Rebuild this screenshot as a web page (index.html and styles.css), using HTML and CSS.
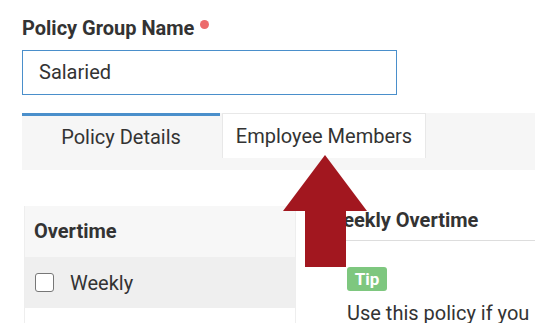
FILE: index.html
```html
<!DOCTYPE html>
<html>
<head>
<meta charset="utf-8">
<link rel="stylesheet" href="styles.css">
</head>
<body>
<div class="page">
  <div class="label-row"><span class="label">Policy Group Name</span><span class="req"></span></div>
  <div class="input">Salaried</div>
  <div class="tabs">
    <div class="tab tab-active">Policy Details</div>
    <div class="tab tab-plain">Employee Members</div>
  </div>
  <div class="content">
    <div class="side">
      <div class="side-head">Overtime</div>
      <div class="side-row"><span class="check"></span><span class="row-text">Weekly</span></div>
      <div class="side-rest"></div>
    </div>
    <div class="main">
      <div class="main-head">Weekly Overtime</div>
      <div class="main-body">
        <span class="tip">Tip</span>
        <p class="desc">Use this policy if you</p>
      </div>
    </div>
  </div>
  <svg class="arrow" width="535" height="323" viewBox="0 0 535 323">
    <polygon points="325,155 367,211 346,211 346,267 305,267 305,211 283,211" fill="#a2171f"/>
  </svg>
</div>
</body>
</html>
```

FILE: styles.css
```css
html, body {
  margin: 0;
  padding: 0;
  background: #ffffff;
}
body {
  font-family: Roboto, "Liberation Sans", sans-serif;
  color: #333333;
  width: 535px;
  height: 323px;
  overflow: hidden;
}
.page {
  position: relative;
  padding: 18px 0 0 22px;
  height: 323px;
  box-sizing: border-box;
  overflow: hidden;
}
.label-row {
  display: flex;
  align-items: flex-start;
  height: 21px;
}
.label {
  font-weight: 700;
  font-size: 20px;
  line-height: 21px;
  color: #333333;
}
.req {
  width: 9px;
  height: 9px;
  border-radius: 50%;
  background: #ec6b6c;
  margin: 2px 0 0 6px;
}
.input {
  margin-top: 11px;
  width: 375px;
  height: 45px;
  box-sizing: border-box;
  border: 1px solid #4a8fcb;
  padding-left: 16px;
  font-size: 20px;
  line-height: 43px;
  color: #333333;
}
.tabs {
  margin-top: 18px;
  display: flex;
  gap: 2px;
  background: #f6f6f6;
  padding-bottom: 12px;
}
.tab {
  height: 45px;
  box-sizing: border-box;
  font-size: 20px;
  text-align: center;
  color: #333333;
}
.tab-active {
  width: 198px;
  border-top: 3px solid #4a8fcb;
  line-height: 42px;
}
.tab-plain {
  width: 204px;
  background: #ffffff;
  border: 1px solid #e8e8e8;
  border-bottom: none;
  line-height: 45px;
}
.content {
  margin-top: 36px;
  display: flex;
}
.side {
  margin-left: 2px;
  width: 272px;
  box-sizing: border-box;
  border-left: 1px solid #eeeeee;
  border-right: 1px solid #eeeeee;
}
.side-head {
  height: 51px;
  background: #f7f7f7;
  padding-left: 9px;
  font-weight: 700;
  font-size: 20px;
  line-height: 51px;
}
.side-row {
  height: 51px;
  background: #efefef;
  padding-left: 10px;
  display: flex;
  align-items: center;
  gap: 16px;
}
.check {
  width: 19px;
  height: 19px;
  box-sizing: border-box;
  border: 1.5px solid #777777;
  border-radius: 3px;
  background: #ffffff;
}
.row-text {
  font-size: 20px;
}
.side-rest {
  height: 40px;
}
.main {
  flex: 1;
  margin-left: 30px;
}
.main-head {
  padding-top: 4px;
  padding-bottom: 9px;
  font-weight: 700;
  font-size: 20px;
  line-height: 21px;
  border-bottom: 1px solid #dddddd;
  white-space: nowrap;
}
.main-body {
  padding: 26px 0 0 21px;
}
.tip {
  display: inline-block;
  vertical-align: top;
  width: 40px;
  height: 24px;
  line-height: 24px;
  text-align: center;
  background: #7ec77f;
  color: #ffffff;
  font-weight: 700;
  font-size: 17px;
  border-radius: 3px;
}
.desc {
  margin: 11px 0 0;
  font-size: 20px;
  line-height: 23px;
  white-space: nowrap;
}
.arrow {
  position: absolute;
  left: 0;
  top: 0;
}
```
